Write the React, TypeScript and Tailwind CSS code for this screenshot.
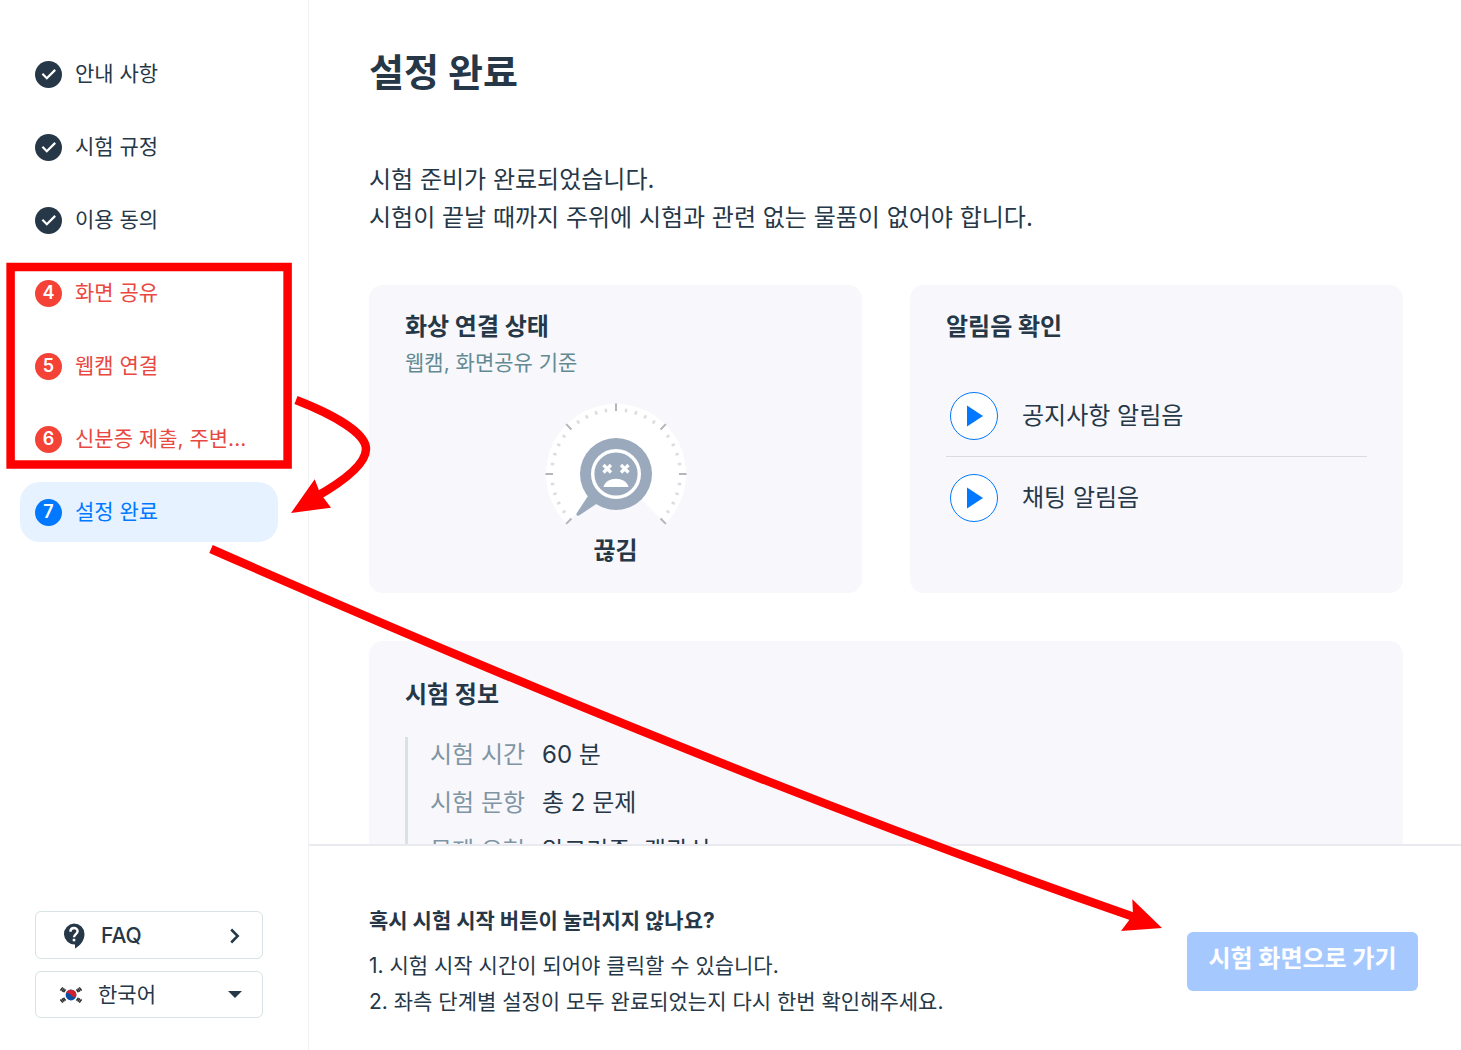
type StepState = "done" | "error" | "current";

const steps: { label: string; state: StepState }[] = [
  { label: "안내 사항", state: "done" },
  { label: "시험 규정", state: "done" },
  { label: "이용 동의", state: "done" },
  { label: "화면 공유", state: "error" },
  { label: "웹캠 연결", state: "error" },
  { label: "신분증 제출, 주변...", state: "error" },
  { label: "설정 완료", state: "current" },
];

const examInfo = [
  { label: "시험 시간", value: "60 분" },
  { label: "시험 문항", value: "총 2 문제" },
  { label: "문제 유형", value: "알고리즘, 객관식" },
];

const rowStyles: Record<StepState, string> = {
  done: "text-[#263747]",
  error: "text-[#e8483f]",
  current: "bg-[#e6f2ff] text-[#0078ff]",
};

const badgeStyles: Record<StepState, string> = {
  done: "bg-[#263747]",
  error: "bg-[#f44336]",
  current: "bg-[#0078ff]",
};

function CheckIcon() {
  return (
    <svg viewBox="0 0 27 27" className="size-[27px]" fill="none" aria-hidden="true">
      <path d="M7.400 12.800 11.800 17.200 20.200 8.900" stroke="#fff" strokeWidth="2.200" />
    </svg>
  );
}

function StepItem({ index, label, state }: { index: number; label: string; state: StepState }) {
  return (
    <li>
      <a
        href="#"
        aria-current={state === "current" ? "step" : undefined}
        className={`flex h-[60px] items-center gap-[13px] rounded-[20px] px-[15px] text-[21px] ${rowStyles[state]}`}
      >
        <span
          className={`flex size-[27px] shrink-0 items-center justify-center rounded-full text-lg font-semibold text-white ${badgeStyles[state]}`}
        >
          {state === "done" ? <CheckIcon /> : index}
        </span>
        <span className="whitespace-nowrap">{label}</span>
      </a>
    </li>
  );
}

function HelpIcon() {
  return (
    <svg viewBox="0 0 22 26" className="h-[26px] w-[22px]" fill="none" aria-hidden="true">
      <path
        d="M11 .5A10.500 10.500 0 1 0 12 21.500V25.500C17.500 22.500 21.500 17 21.500 11A10.500 10.500 0 0 0 11 .5Z"
        fill="#263747"
      />
      <path d="M7.400 8.700C7.400 3.700 14.600 3.900 14.600 8.300 14.600 11 11 11.200 11 14.300" stroke="#fff" strokeWidth="2.400" />
      <path d="M9.700 15.800h2.600v2.500H9.700Z" fill="#fff" />
    </svg>
  );
}

function KoreaFlag() {
  return (
    <svg viewBox="0 0 24 18" className="h-[18px] w-6" aria-hidden="true">
      <circle cx="12" cy="9" r="5.400" fill="#0b4ea2" />
      <path d="M6.900 7.200A5.400 5.400 0 0 1 17.300 9.800C16 12 13.500 11 12 9S8 7 6.900 7.200Z" fill="#d0202e" />
      <g stroke="#2b2b2b" strokeWidth="1.500">
        <path d="M1.400 4.500 3.800 1.400M3 5.500 5.200 2.300M4.500 6.300 6.600 3.400" />
        <path d="M20.200 1.400l2.400 3.100M18.800 2.300l2.200 3.200M17.400 3.400l2.100 2.900" />
        <path d="M1.400 13.500l2.400 3.100M3 12.500l2.200 3.200M4.500 11.700l2.100 2.900" />
        <path d="M20.200 16.600l2.400-3.100M18.800 15.700l2.200-3.200M17.400 14.600l2.100-2.900" />
      </g>
    </svg>
  );
}

function Sidebar() {
  return (
    <aside className="flex w-[309px] shrink-0 flex-col justify-between border-r border-[#f0f1f3] pt-11 pb-8">
      <ol className="flex flex-col gap-[13px] pr-[30px] pl-5">
        {steps.map((step, i) => (
          <StepItem key={step.label} index={i + 1} {...step} />
        ))}
      </ol>

      <div className="flex flex-col gap-3 pr-[45px] pl-[35px] text-[21px]">
        <a
          href="#"
          className="flex h-12 items-center rounded-md border border-[#d7e2e4] pt-px pr-[22px] pl-[27px] font-medium"
        >
          <HelpIcon />
          <span className="ml-4 grow">FAQ</span>
          <svg viewBox="0 0 10 16" className="h-4 w-2.5" fill="none" aria-hidden="true">
            <path d="M1.200 1.500 7.700 8 1.200 14.500" stroke="#263747" strokeWidth="2.500" />
          </svg>
        </a>
        <div className="relative">
          <select
            aria-label="언어"
            defaultValue="ko"
            className="h-[47px] w-full appearance-none rounded-md border border-[#d7e2e4] bg-white pl-[62px]"
          >
            <option value="ko">한국어</option>
            <option value="en">English</option>
          </select>
          <span className="pointer-events-none absolute inset-y-0 left-6 flex items-center">
            <KoreaFlag />
          </span>
          <span className="pointer-events-none absolute inset-y-0 right-[21px] flex items-center">
            <svg viewBox="0 0 14 7" className="h-[7px] w-3.5" aria-hidden="true">
              <path d="M0 0H14L7 7Z" fill="#263747" />
            </svg>
          </span>
        </div>
      </div>
    </aside>
  );
}

function Gauge() {
  const ticks = Array.from({ length: 31 }, (_, i) => ({ angle: -135 + i * 9, major: i % 5 === 0 }));

  return (
    <svg viewBox="-72 -72 144 144" className="size-36" aria-hidden="true">
      <path d="M0 0-49.500 49.500A70 70 0 1 1 49.500 49.500Z" fill="#fff" />
      {ticks.map(({ angle, major }) =>
        major ? (
          <path key={angle} d="M0-70.500V-63" stroke="#b4b6ba" strokeWidth="2" transform={`rotate(${angle})`} />
        ) : (
          <path key={angle} d="M0-66V-62.500" stroke="#dcdde1" strokeWidth="2.500" transform={`rotate(${angle})`} />
        )
      )}
      <circle r="36" fill="#9aa9bc" />
      <path d="M-28 22-39.500 39.500Q-40 42.500-37 41.500L-19 29.500Z" fill="#9aa9bc" />
      <circle r="23.300" fill="none" stroke="#fff" strokeWidth="3.400" />
      <path
        d="M-12.500-9l7.500 7.500M-5-9l-7.500 7.500M5-9l7.500 7.500M12.500-9l-7.500 7.500"
        stroke="#fff"
        strokeWidth="3.200"
      />
      <path d="M-12.500 13C-10 2 10 2 12.500 13Z" fill="#fff" />
    </svg>
  );
}

function SoundRow({ label }: { label: string }) {
  return (
    <li className="flex h-[82px] items-center gap-6 px-1 text-2xl">
      <button
        type="button"
        aria-label={`${label} 재생`}
        className="flex size-12 items-center justify-center rounded-full border border-[#0078ff] bg-white"
      >
        <svg viewBox="0 0 16 22" className="ml-0.5 h-[22px] w-4" aria-hidden="true">
          <path d="M0 .5 16 11 0 21.500Z" fill="#0078ff" />
        </svg>
      </button>
      <span>{label}</span>
    </li>
  );
}

// Red markers laid over the page to point out the steps to redo
function Annotations() {
  return (
    <svg
      width="1461"
      height="1050"
      className="pointer-events-none absolute top-0 left-0"
      fill="none"
      stroke="#fe0000"
      strokeWidth="8.500"
      aria-hidden="true"
    >
      <rect x="10.600" y="267" width="277" height="197.500" />
      <path d="M296 400C337 416 366 434 366 449C366 463 346 480 314 498" />
      <path d="M211 549Q730 777 1134 917" />
      <g fill="#fe0000" stroke="none">
        <path d="M291 513 314.700 479.300 320 493 331 507.700Z" />
        <path d="M1162 928 1132.300 899.300 1133 915 1121 931Z" />
      </g>
    </svg>
  );
}

export default function App() {
  return (
    <div className="relative flex h-screen overflow-hidden bg-white font-['Inter','Noto_Sans_CJK_KR',sans-serif] text-[#263747]">
      <Sidebar />

      <div className="flex min-w-0 grow flex-col">
        <main className="min-h-0 grow overflow-hidden pt-11 pr-[58px] pl-[60px]">
          <h1 className="text-[38px] leading-[56px] font-bold">설정 완료</h1>
          <p className="mt-[61px] text-2xl leading-[38px]">
            시험 준비가 완료되었습니다.
            <br />
            시험이 끝날 때까지 주위에 시험과 관련 없는 물품이 없어야 합니다.
          </p>

          <div className="mt-12 grid grid-cols-2 gap-12">
            <section className="h-[308px] rounded-[14px] bg-[#f7f7fc] px-9 pt-6">
              <h2 className="text-2xl leading-9 font-bold">화상 연결 상태</h2>
              <p className="text-[21px] leading-9 text-[#638a92]">웹캠, 화면공유 기준</p>
              <div className="mt-[21px] flex flex-col items-center">
                <Gauge />
                <p className="-mt-[13px] text-2xl leading-9 font-bold">끊김</p>
              </div>
            </section>

            <section className="h-[308px] rounded-[14px] bg-[#f7f7fc] px-9 pt-6">
              <h2 className="text-2xl leading-9 font-bold">알림음 확인</h2>
              <ul className="mt-[30px] divide-y divide-[#d9dde3]">
                <SoundRow label="공지사항 알림음" />
                <SoundRow label="채팅 알림음" />
              </ul>
            </section>
          </div>

          <section className="mt-12 rounded-[14px] bg-[#f7f7fc] px-9 py-9">
            <h2 className="text-2xl leading-9 font-bold">시험 정보</h2>
            <dl className="mt-6 flex flex-col gap-3 border-l-[3px] border-[#d7e2e4] pl-[22px] text-2xl leading-9">
              {examInfo.map(item => (
                <div key={item.label} className="flex">
                  <dt className="w-28 text-[#7f95a3]">{item.label}</dt>
                  <dd>{item.value}</dd>
                </div>
              ))}
            </dl>
          </section>
        </main>

        <footer className="flex h-[206px] shrink-0 items-center justify-between border-t-2 border-[#e8eaef] pt-[26px] pr-[43px] pl-[60px]">
          <div className="text-[21px] leading-9">
            <h3 className="mb-[9px] font-bold">혹시 시험 시작 버튼이 눌러지지 않나요?</h3>
            <ol>
              <li>1. 시험 시작 시간이 되어야 클릭할 수 있습니다.</li>
              <li>2. 좌측 단계별 설정이 모두 완료되었는지 다시 한번 확인해주세요.</li>
            </ol>
          </div>
          <button
            type="button"
            className="h-[59px] w-[231px] rounded-md bg-[#a5c9ff] pb-1 text-2xl font-bold text-white"
          >
            시험 화면으로 가기
          </button>
        </footer>
      </div>

      <Annotations />
    </div>
  );
}
